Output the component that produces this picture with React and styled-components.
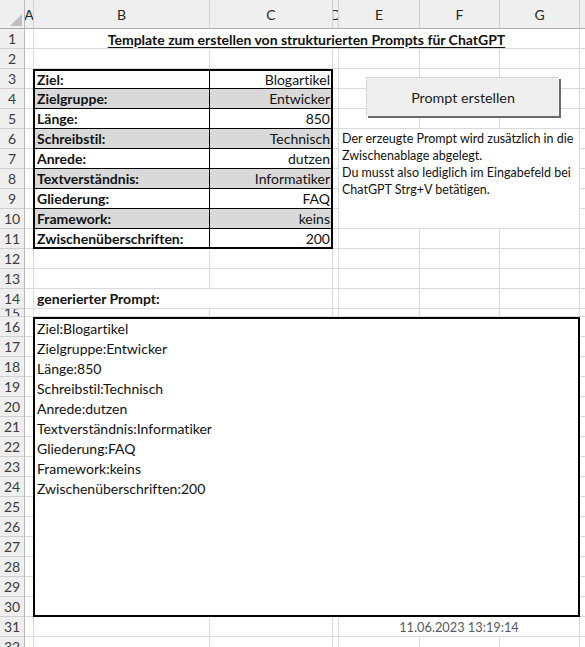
import React from 'react';
import styled, { createGlobalStyle } from 'styled-components';

const GlobalStyle = createGlobalStyle`
	html, body {
		margin: 0;
		padding: 0;
		background: #ffffff;
		overflow: hidden;
	}
	body {
		font-family: Lato, "Liberation Sans", sans-serif;
		font-variant-ligatures: none;
		color: #111111;
	}
`;

const COLS = ['A', 'B', 'C', 'D', 'E', 'F', 'G', 'H'];
const ROW_COUNT = 32;

const fields = [
	['Ziel:', 'Blogartikel'],
	['Zielgruppe:', 'Entwicker'],
	['Länge:', '850'],
	['Schreibstil:', 'Technisch'],
	['Anrede:', 'dutzen'],
	['Textverständnis:', 'Informatiker'],
	['Gliederung:', 'FAQ'],
	['Framework:', 'keins'],
	['Zwischenüberschriften:', '200'],
];

// merged areas on the sheet (col index: A=2 ... H=9, sheet rows 1-based)
const blocks = [
	{ r1: 1, r2: 1, c1: 3, c2: 8 },
	{ r1: 3, r2: 11, c1: 3, c2: 4 },
	{ r1: 6, r2: 10, c1: 6, c2: 8 },
	{ r1: 14, r2: 14, c1: 3, c2: 4 },
	{ r1: 16, r2: 30, c1: 3, c2: 8 },
	{ r1: 31, r2: 31, c1: 6, c2: 8 },
];

const covered = (r, c) =>
	blocks.some(b => r >= b.r1 && r <= b.r2 && c >= b.c1 && c <= b.c2);

const rowHeight = r => (r === 15 ? '8px' : '20px');

const Sheet = styled.div`
	position: relative;
	display: grid;
	grid-template-columns: 25px 9px 176px 123px 6px 81px 80px 80px 80px;
	grid-template-rows: 29px ${Array.from({ length: ROW_COUNT }, (_, i) => rowHeight(i + 1)).join(' ')};
	width: 660px;
	font-size: 14px;
`;

const Corner = styled.div`
	grid-column: 1;
	grid-row: 1;
	position: relative;
	background: #efefef;
	border-right: 1px solid #b8b8b8;
	border-bottom: 1px solid #ababab;
	box-sizing: border-box;

	svg {
		position: absolute;
		right: 2px;
		bottom: 2px;
	}
`;

const ColHead = styled.div`
	grid-column: ${p => p.$col};
	grid-row: 1;
	display: flex;
	align-items: center;
	justify-content: center;
	overflow: hidden;
	background: #efefef;
	border-right: 1px solid #d0d0d0;
	border-bottom: 1px solid #ababab;
	box-sizing: border-box;
	color: #262626;
	font-size: 14px;
	padding-top: 1px;
`;

const RowHead = styled.div`
	grid-column: 1;
	grid-row: ${p => p.$row};
	display: flex;
	align-items: center;
	justify-content: center;
	overflow: hidden;
	background: #efefef;
	border-right: 1px solid #b8b8b8;
	border-bottom: 1px solid #d0d0d0;
	box-sizing: border-box;
	color: #3c3c3c;
	font-size: 14px;
	line-height: 20px;
`;

const Cell = styled.div`
	grid-column: ${p => p.$col};
	grid-row: ${p => p.$row};
	border-right: 1px solid #dadada;
	border-bottom: 1px solid #dadada;
	box-sizing: border-box;
`;

const Title = styled.div`
	grid-column: 3 / 9;
	grid-row: 2;
	display: flex;
	align-items: center;
	justify-content: center;
	border-bottom: 1px solid #dadada;
	border-right: 1px solid #dadada;
	box-sizing: border-box;
	font-weight: 700;
	font-size: 14px;
	text-decoration: underline;
	text-underline-offset: 2px;
	padding-top: 1px;
`;

const DataTable = styled.div`
	grid-column: 3 / 5;
	grid-row: 4 / 13;
	display: grid;
	grid-template-columns: 175px 1fr;
	grid-template-rows: 18px repeat(7, 20px) 18px;
	border: 2px solid #000000;
	box-sizing: border-box;
	margin-left: -1px;
`;

const Label = styled.div`
	display: flex;
	align-items: center;
	padding-left: 2px;
	font-weight: 700;
	background: ${p => (p.$shade ? '#d9d9d9' : '#ffffff')};
	border-right: 1px solid #000000;
	border-bottom: ${p => (p.$last ? 'none' : '1px solid #000000')};
`;

const Value = styled.div`
	display: flex;
	align-items: center;
	justify-content: flex-end;
	padding-right: 1px;
	background: ${p => (p.$shade ? '#d9d9d9' : '#ffffff')};
	border-bottom: ${p => (p.$last ? 'none' : '1px solid #000000')};
`;

const Note = styled.div`
	grid-column: 6 / 9;
	grid-row: 7 / 12;
	border-right: 1px solid #dadada;
	border-bottom: 1px solid #dadada;
	box-sizing: border-box;
	padding: 1px 0 0 3px;
	font-size: 12.5px;
	line-height: 17px;
	white-space: nowrap;
`;

const SectionLabel = styled.div`
	grid-column: 3 / 5;
	grid-row: 15;
	display: flex;
	align-items: center;
	padding-left: 3px;
	font-weight: 700;
	border-right: 1px solid #dadada;
	border-bottom: 1px solid #dadada;
	box-sizing: border-box;
`;

const Prompt = styled.div`
	grid-column: 3 / 9;
	grid-row: 17 / 32;
	border: 2px solid #000000;
	box-sizing: border-box;
	margin-left: -1px;
	padding-left: 2px;
	background: #ffffff;
`;

const PromptLine = styled.div`
	line-height: 20px;
	white-space: nowrap;
`;

const Stamp = styled.div`
	grid-column: 6 / 9;
	grid-row: 32;
	display: flex;
	align-items: center;
	justify-content: center;
	color: #595959;
	font-size: 12.8px;
	border-right: 1px solid #dadada;
	border-bottom: 1px solid #dadada;
	box-sizing: border-box;
`;

const MacroButton = styled.button`
	position: absolute;
	left: 366px;
	top: 77px;
	width: 193px;
	height: 39px;
	background: #efefef;
	border: none;
	border-top: 1px solid #d6d6d6;
	border-left: 1px solid #d6d6d6;
	box-shadow: 2px 2px 0 #6b6b6b;
	font-family: inherit;
	font-size: 14.3px;
	color: #1a1a1a;
	padding: 0;
	cursor: pointer;
`;

export default function App() {
	const gridCells = [];
	for (let r = 1; r <= ROW_COUNT; r++) {
		gridCells.push(
			<RowHead key={`h${r}`} $row={r + 1}>
				{r}
			</RowHead>
		);
		for (let c = 2; c <= 9; c++) {
			if (covered(r, c)) continue;
			gridCells.push(<Cell key={`${r}-${c}`} $row={r + 1} $col={c} />);
		}
	}

	return (
		<React.Fragment>
			<GlobalStyle />
			<Sheet>
				<Corner>
					<svg width="12" height="12" viewBox="0 0 12 12">
						<polygon points="12,0 12,12 0,12" fill="#bdbdbd" />
					</svg>
				</Corner>
				{COLS.map((name, i) => (
					<ColHead key={name} $col={i + 2}>
						{name}
					</ColHead>
				))}
				{gridCells}

				<Title>Template zum erstellen von strukturierten Prompts für ChatGPT</Title>

				<DataTable>
					{fields.map(([label, value], i) => (
						<React.Fragment key={label}>
							<Label $shade={i % 2 === 1} $last={i === fields.length - 1}>
								{label}
							</Label>
							<Value $shade={i % 2 === 1} $last={i === fields.length - 1}>
								{value}
							</Value>
						</React.Fragment>
					))}
				</DataTable>

				<Note>
					Der erzeugte Prompt wird zusätzlich in die
					<br />
					Zwischenablage abgelegt.
					<br />
					Du musst also lediglich im Eingabefeld bei
					<br />
					ChatGPT Strg+V betätigen.
				</Note>

				<SectionLabel>generierter Prompt:</SectionLabel>

				<Prompt>
					{fields.map(([label, value]) => (
						<PromptLine key={label}>
							{label}
							{value}
						</PromptLine>
					))}
				</Prompt>

				<Stamp>11.06.2023 13:19:14</Stamp>

				<MacroButton>Prompt erstellen</MacroButton>
			</Sheet>
		</React.Fragment>
	);
}
